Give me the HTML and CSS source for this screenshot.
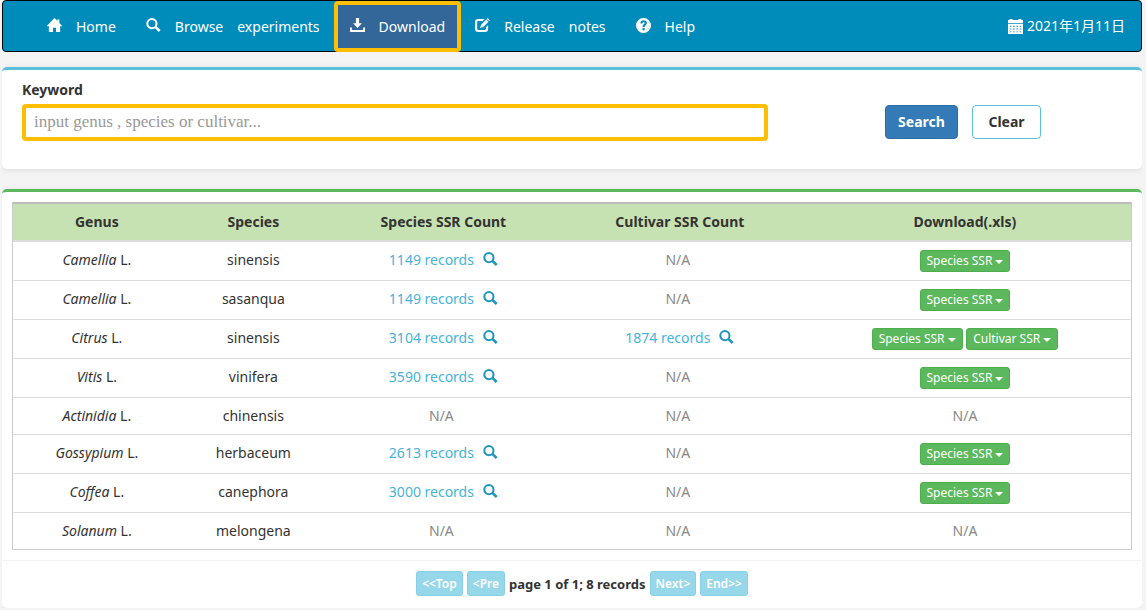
FILE: index.html
```html
<!DOCTYPE html>
<html lang="en">
<head>
<meta charset="utf-8">
<title>SSR Download</title>
<link rel="stylesheet" href="styles.css">
</head>
<body>
<svg class="sprite" aria-hidden="true">
  <symbol id="home" viewBox="0 0 16 16"><path d="M8 0l3 3V1.500h2.200V5.200L16.500 8.700H14V15H9.600v-4.600H6.400V15H2V8.700H-.5z"/></symbol>
  <symbol id="search" viewBox="0 0 16 16"><circle cx="6.300" cy="6" r="4.900" fill="none" stroke="currentColor" stroke-width="2.200"/><path d="m9 10.300 1.900-1.900 4.700 4.300-2 2.300z"/></symbol>
  <symbol id="save" viewBox="0 0 16 16"><path d="M6.300 0h3.400v5.500h3L8 10.700 3.300 5.500h3zM0 10h2v2.700h12V10h2v5H0z"/></symbol>
  <symbol id="edit" viewBox="0 0 16 16"><path d="M10.500 1h-7A3.500 3.500 0 0 0 0 4.500v7A3.500 3.500 0 0 0 3.500 15h7a3.500 3.500 0 0 0 3.500-3.500V7.500l-2.300 2.300v1.700a1.200 1.200 0 0 1-1.200 1.200h-7a1.200 1.200 0 0 1-1.200-1.200v-7a1.200 1.200 0 0 1 1.200-1.200h4.700z"/><path d="m5.300 10.700 1.200-3.600L12 1.600l2.400 2.400-5.500 5.500zM12.700 1l.9-.9 2.300 2.300-.9.900z"/></symbol>
  <symbol id="help" viewBox="0 0 16 16"><path fill-rule="evenodd" d="M8 0a8 8 0 1 1 0 16A8 8 0 0 1 8 0zM4.700 5.800h2.200c0-1 .5-1.400 1.200-1.400s1.200.4 1.200 1c0 1.300-2.300 1.400-2.300 4.100h2.200c0-1.700 2.400-1.900 2.400-4.300C11.600 3.500 10.100 2.500 8.200 2.500c-2.100 0-3.500 1.200-3.500 3.300zM6.900 10.700v2.300h2.300v-2.300z"/></symbol>
  <symbol id="calendar" viewBox="0 0 16 16"><path d="M0 1h1.800V0h3v1h6.400V0h3v1H16v3.600H0z"/><path fill-rule="evenodd" d="M0 5.400h16V16H0zM2 7.200v1h1.600v-1zm3.500 0v1h1.600v-1zm3.500 0v1h1.600v-1zm3.500 0v1h1.600v-1zM2 10.200v1h1.600v-1zm3.500 0v1h1.600v-1zm3.500 0v1h1.600v-1zm3.500 0v1h1.600v-1zM2 13.200v1h1.600v-1zm3.500 0v1h1.600v-1zm3.500 0v1h1.600v-1zm3.500 0v1h1.600v-1z"/></symbol>
</svg>

<nav class="navbar">
  <a class="nav-item" href="#"><svg class="icon"><use href="#home"/></svg><span>Home</span></a>
  <a class="nav-item" href="#"><svg class="icon"><use href="#search"/></svg><span>Browse</span><span>experiments</span></a>
  <a class="nav-item active" href="#"><svg class="icon"><use href="#save"/></svg><span>Download</span></a>
  <a class="nav-item" href="#"><svg class="icon"><use href="#edit"/></svg><span>Release</span><span>notes</span></a>
  <a class="nav-item" href="#"><svg class="icon"><use href="#help"/></svg><span>Help</span></a>
  <div class="date"><svg class="icon"><use href="#calendar"/></svg><span>2021年1月11日</span></div>
</nav>

<form class="card search-card">
  <div class="field">
    <label for="keyword">Keyword</label>
    <input id="keyword" type="text" placeholder="input genus , species or cultivar...">
  </div>
  <div class="actions">
    <button class="btn primary" type="button">Search</button>
    <button class="btn outline" type="button">Clear</button>
  </div>
</form>

<section class="card result-card">
  <div class="table-wrap">
  <table>
    <colgroup><col class="c-genus"><col class="c-species"><col class="c-count"><col class="c-cultivar"><col></colgroup>
    <thead>
      <tr><th>Genus</th><th>Species</th><th>Species SSR Count</th><th>Cultivar SSR Count</th><th>Download(.xls)</th></tr>
    </thead>
    <tbody>
      <tr><td><i>Camellia</i> L.</td><td>sinensis</td><td><a href="#">1149 records<svg class="icon"><use href="#search"/></svg></a></td><td class="na">N/A</td><td class="dl"><button type="button">Species SSR</button></td></tr>
      <tr><td><i>Camellia</i> L.</td><td>sasanqua</td><td><a href="#">1149 records<svg class="icon"><use href="#search"/></svg></a></td><td class="na">N/A</td><td class="dl"><button type="button">Species SSR</button></td></tr>
      <tr><td><i>Citrus</i> L.</td><td>sinensis</td><td><a href="#">3104 records<svg class="icon"><use href="#search"/></svg></a></td><td><a href="#">1874 records<svg class="icon"><use href="#search"/></svg></a></td><td class="dl"><button type="button">Species SSR</button> <button type="button">Cultivar SSR</button></td></tr>
      <tr><td><i>Vitis</i> L.</td><td>vinifera</td><td><a href="#">3590 records<svg class="icon"><use href="#search"/></svg></a></td><td class="na">N/A</td><td class="dl"><button type="button">Species SSR</button></td></tr>
      <tr><td><i>Actinidia</i> L.</td><td>chinensis</td><td class="na">N/A</td><td class="na">N/A</td><td class="na-dl">N/A</td></tr>
      <tr><td><i>Gossypium</i> L.</td><td>herbaceum</td><td><a href="#">2613 records<svg class="icon"><use href="#search"/></svg></a></td><td class="na">N/A</td><td class="dl"><button type="button">Species SSR</button></td></tr>
      <tr><td><i>Coffea</i> L.</td><td>canephora</td><td><a href="#">3000 records<svg class="icon"><use href="#search"/></svg></a></td><td class="na">N/A</td><td class="dl"><button type="button">Species SSR</button></td></tr>
      <tr><td><i>Solanum</i> L.</td><td>melongena</td><td class="na">N/A</td><td class="na">N/A</td><td class="na-dl">N/A</td></tr>
    </tbody>
  </table>
  </div>
  <div class="pager">
    <button type="button" disabled>&lt;&lt;Top</button>
    <button type="button" disabled>&lt;Pre</button>
    <span>page 1 of 1; 8 records</span>
    <button type="button" disabled>Next&gt;</button>
    <button type="button" disabled>End&gt;&gt;</button>
  </div>
</section>
</body>
</html>
```

FILE: styles.css
```css
* { box-sizing: border-box; }

body {
  margin: 0 4px 0 2px;
  background: #f4f4f4;
  color: #333;
  font: 14px/20px "Noto Sans", "Noto Sans CJK SC", sans-serif;
}

a { text-decoration: none; }

button, input { font: inherit; }

.sprite { display: none; }

.icon {
  flex: none;
  width: 15px;
  height: 15px;
  fill: currentColor;
}

.navbar {
  display: flex;
  height: 52px;
  margin-bottom: 15px;
  padding: 0 16px 0 29px;
  border: 1px solid #080808;
  border-radius: 4px;
  background: #008cba;
  color: #fff;
}

.nav-item {
  position: relative;
  display: flex;
  align-items: center;
  gap: 14px;
  padding: 2px 15px 0;
  color: #fff;
}

.nav-item .icon { margin-bottom: 4px; }

.nav-item.active { background: #336699; }

.nav-item.active::after {
  content: "";
  position: absolute;
  inset: 0 -1px -1px -1px;
  border: 4px solid #ffbf00;
  border-radius: 4px;
}

.date {
  display: flex;
  align-items: center;
  gap: 4px;
  margin-left: auto;
}

.card {
  border-top: 3px solid #5bc0de;
  border-radius: 5px;
  background: #fff;
  box-shadow: 0 1px 6px rgba(0, 0, 0, .1);
}

.search-card {
  display: flex;
  margin-bottom: 20px;
  padding: 10px 101px 28px 20px;
}

.field {
  flex: 1;
  display: flex;
  flex-direction: column;
  gap: 4px;
}

label, th, .btn, .pager { font-weight: 700; }

input {
  width: 100%;
  height: 37px;
  padding: 0 8px 2px;
  border: 4px solid #ffbf00;
  border-radius: 4px;
  color: #333;
  font: 17px "Liberation Serif", serif;
}

input::placeholder { color: #999; }

.actions {
  display: flex;
  align-items: flex-start;
  gap: 14px;
  margin: 25px 0 0 117px;
}

.btn {
  height: 34px;
  padding: 0;
  border: 1px solid;
  border-radius: 4px;
}

.primary {
  width: 73px;
  border-color: #2e6da4;
  background: #337ab7;
  color: #fff;
}

.outline {
  width: 69px;
  border-color: #5bc0de;
  background: #fff;
  color: #333;
}

.result-card { border-top-color: #5cb85c; }

.table-wrap { padding: 10px; }

table {
  width: 100%;
  table-layout: fixed;
  border-collapse: separate;
  border-spacing: 0;
  border: 1px solid #ccc;
  border-top: 2px solid #bbb;
}

.c-genus { width: 15%; }
.c-species { width: 13%; }
.c-count { width: 21%; }
.c-cultivar { width: 21.3%; }

th, td {
  padding: 8px;
  text-align: center;
  vertical-align: top;
}

th {
  border-bottom: 2px solid #ddd;
  background: #c7e2b2;
}

td { border-bottom: 1px solid #ddd; }

tbody tr:last-child td { border-bottom: 0; }

td a { color: #46b3d9; }

td .icon {
  margin-left: 9px;
  color: #2196bd;
  vertical-align: -2px;
}

.na, .na-dl { color: #888; }

.na { padding-right: 12px; }

.dl button {
  height: 22px;
  padding: 0 6px;
  border: 1px solid #4cae4c;
  border-radius: 3px;
  background: #5cb85c;
  color: #fff;
  font-size: 12px;
  line-height: 18px;
}

.dl button::after {
  content: "";
  display: inline-block;
  margin-left: 3px;
  border: 4px solid transparent;
  border-top-color: #fff;
  border-bottom: 0;
  vertical-align: middle;
}

.pager {
  display: flex;
  align-items: center;
  justify-content: center;
  gap: 4px;
  padding: 10px 10px 12px 30px;
  border-top: 1px solid #f4f4f4;
  font-size: 13px;
}

.pager button {
  height: 25px;
  padding: 0 5px;
  border: 1px solid #88d0e5;
  border-radius: 3px;
  background: #97d7ea;
  color: #fff;
  font-size: 12px;
  font-weight: 600;
}
```
